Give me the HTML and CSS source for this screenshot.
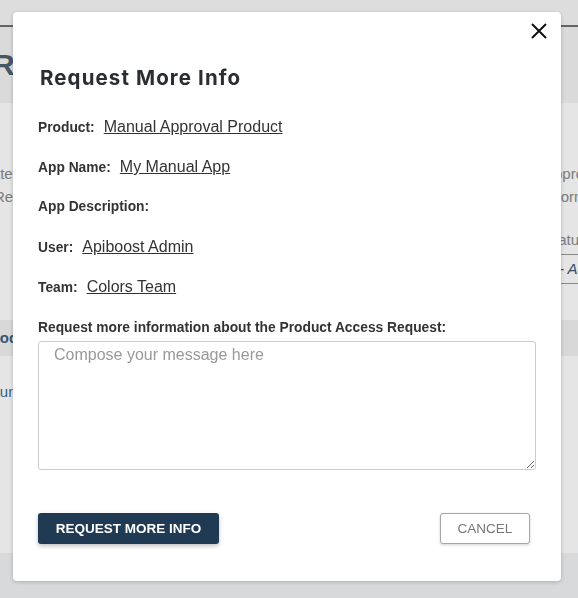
FILE: index.html
```html
<!DOCTYPE html>
<html lang="en">
<head>
  <meta charset="UTF-8" />
  <meta name="viewport" content="width=device-width, initial-scale=1.0" />
  <title>Product Access Request</title>
  <link rel="stylesheet" href="styles.css">
</head>
<body>
  <div class="page">
    <div class="topbar"></div>
    <div class="hero">
      <h1>Review Request</h1>
    </div>
    <div class="details">
      <div class="col">
        <p>Date</p>
        <p class="shift">Requested</p>
      </div>
      <div class="col right">
        <p>Approval</p>
        <p>Information</p>
        <p class="status">Status</p>
        <div class="select">-- Any --</div>
      </div>
    </div>
    <div class="table-head">Product</div>
    <div class="table-row"><a href="#">Run</a></div>
    <div class="footer"></div>
  </div>

  <div class="overlay"></div>

  <div class="modal">
    <button class="close" type="button" aria-label="Close">
      <svg width="16" height="16" viewBox="0 0 16 16">
        <path d="M1 1 L15 15 M15 1 L1 15" stroke="#111" stroke-width="2" fill="none" />
      </svg>
    </button>

    <h2>Request More Info</h2>

    <div class="row"><span class="label">Product:</span><a href="#">Manual Approval Product</a></div>
    <div class="row"><span class="label">App Name:</span><a href="#">My Manual App</a></div>
    <div class="row"><span class="label">App Description:</span></div>
    <div class="row"><span class="label">User:</span><a href="#">Apiboost Admin</a></div>
    <div class="row"><span class="label">Team:</span><a href="#">Colors Team</a></div>

    <label class="field-label" for="message">Request more information about the Product Access Request:</label>
    <textarea id="message" placeholder="Compose your message here"></textarea>

    <div class="actions">
      <button class="btn primary" type="button">Request More Info</button>
      <button class="btn secondary" type="button">Cancel</button>
    </div>
  </div>
</body>
</html>
```

FILE: styles.css
```css
body {
  margin: 0;
  font-family: "Liberation Sans", Arial, sans-serif;
  background: #fff;
  overflow: hidden;
}

/* page behind the dialog */
.page {
  height: 598px;
  display: flex;
  flex-direction: column;
}
.topbar {
  height: 25px;
  background: #f7f7f7;
  border-bottom: 2px solid #707070;
}
.hero {
  height: 76px;
  background: #f3f3f3;
  display: flex;
  align-items: center;
}
.hero h1 {
  margin: 0 0 0 -7px;
  font-size: 30px;
  color: #4d6070;
}
.details {
  height: 217px;
  display: flex;
  justify-content: space-between;
  padding-top: 62px;
  box-sizing: border-box;
  color: #8a8a8a;
  font-size: 15px;
}
.details p {
  margin: 0 0 6px;
}
.col {
  margin-left: -19px;
}
.col .shift {
  margin-left: 13px;
}
.col.right {
  width: 120px;
  margin-left: 0;
  margin-right: -86px;
}
.details .status {
  margin-top: 26px;
  margin-bottom: 6px;
}
.select {
  border-top: 1px solid #999;
  border-bottom: 1px solid #999;
  padding: 5px 0 6px 10px;
  color: #3a5775;
  font-style: italic;
}
.table-head {
  height: 36px;
  line-height: 36px;
  background: #f1f1f1;
  margin-left: -16px;
  font-weight: bold;
  color: #3f5f80;
  font-size: 15px;
}
.table-row {
  height: 197px;
  padding-top: 27px;
  box-sizing: border-box;
  margin-left: -11px;
  font-size: 15px;
}
.table-row a {
  color: #3f6a94;
  text-decoration: none;
}
.footer {
  flex: 1;
  background: #f0f2f3;
}

.overlay {
  position: fixed;
  inset: 0;
  background: rgba(0, 0, 0, 0.1);
}

/* dialog */
.modal {
  position: fixed;
  top: 12px;
  left: 13px;
  width: 548px;
  height: 569px;
  box-sizing: border-box;
  padding: 54px 25px 0;
  background: #fff;
  border-radius: 4px;
  box-shadow: 0 1px 4px rgba(0, 0, 0, 0.22);
  color: #333;
}
.close {
  position: absolute;
  top: 11px;
  right: 14px;
  width: 16px;
  height: 16px;
  padding: 0;
  border: none;
  background: none;
  cursor: pointer;
}
.close svg {
  display: block;
}
.modal h2 {
  margin: 0 0 27px 2px;
  font-family: Inter, sans-serif;
  font-size: 20.5px;
  line-height: 24px;
  font-weight: 700;
  letter-spacing: 1.1px;
  color: #2a2e33;
}
.row {
  display: flex;
  align-items: baseline;
  gap: 9px;
  height: 20px;
  line-height: 20px;
  margin-bottom: 20px;
}
.label,
.field-label {
  font-size: 13.8px;
  font-weight: bold;
  color: #333;
}
.row a {
  font-size: 16px;
  color: #333;
}
.field-label {
  display: block;
  line-height: 20px;
  margin-top: 21px;
}
textarea {
  display: block;
  width: 100%;
  height: 129px;
  margin-top: 3px;
  box-sizing: border-box;
  padding: 4px 15px;
  border: 1px solid #ccc;
  border-radius: 3px;
  font-family: "Liberation Sans", Arial, sans-serif;
  font-size: 16px;
}
textarea::placeholder {
  color: #999;
}
.actions {
  display: flex;
  justify-content: space-between;
  margin-top: 43px;
}
.btn {
  height: 31px;
  border-radius: 3px;
  font-family: "Liberation Sans", Arial, sans-serif;
  font-size: 13.5px;
  text-transform: uppercase;
  cursor: pointer;
}
.primary {
  width: 181px;
  background: #1f3a52;
  color: #fff;
  font-weight: bold;
  border: none;
  box-shadow: 0 2px 4px rgba(0, 0, 0, 0.25);
}
.secondary {
  width: 90px;
  margin-right: 6px;
  background: #fff;
  color: #777;
  border: 1px solid #a6a6a6;
  box-shadow: 0 1px 3px rgba(0, 0, 0, 0.18);
}
```
